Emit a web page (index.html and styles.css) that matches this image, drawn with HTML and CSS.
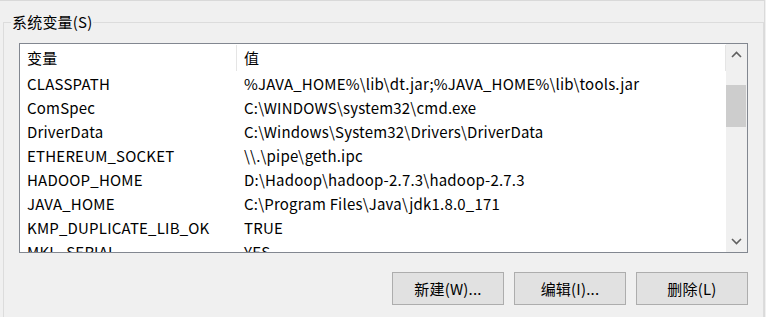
FILE: index.html
```html
<html>
  <head>
    <title>系统变量</title>
    <link rel="stylesheet" href="styles.css">
  </head>
  <body>
    <div class="panel">
      <fieldset class="group">
        <legend class="group-title">系统变量(S)</legend>

        <!-- Lista delle variabili -->
        <div class="listbox">
          <div class="list">
            <div class="row head">
              <div class="cell name">变量</div>
              <div class="cell value">值</div>
            </div>
            <div class="row"><div class="cell name">CLASSPATH</div><div class="cell value">%JAVA_HOME%\lib\dt.jar;%JAVA_HOME%\lib\tools.jar</div></div>
            <div class="row"><div class="cell name">ComSpec</div><div class="cell value">C:\WINDOWS\system32\cmd.exe</div></div>
            <div class="row"><div class="cell name">DriverData</div><div class="cell value">C:\Windows\System32\Drivers\DriverData</div></div>
            <div class="row"><div class="cell name">ETHEREUM_SOCKET</div><div class="cell value">\\.\pipe\geth.ipc</div></div>
            <div class="row"><div class="cell name">HADOOP_HOME</div><div class="cell value">D:\Hadoop\hadoop-2.7.3\hadoop-2.7.3</div></div>
            <div class="row"><div class="cell name">JAVA_HOME</div><div class="cell value">C:\Program Files\Java\jdk1.8.0_171</div></div>
            <div class="row"><div class="cell name">KMP_DUPLICATE_LIB_OK</div><div class="cell value">TRUE</div></div>
            <div class="row"><div class="cell name">MKL_SERIAL</div><div class="cell value">YES</div></div>
          </div>

          <!-- Barra di scorrimento -->
          <div class="scrollbar">
            <div class="arrow">
              <svg width="11" height="7" viewBox="0 0 11 7"><polyline points="1,6 5.5,1.5 10,6" fill="none" stroke="#606060" stroke-width="1.6"/></svg>
            </div>
            <div class="track">
              <div class="thumb"></div>
            </div>
            <div class="arrow">
              <svg width="11" height="7" viewBox="0 0 11 7"><polyline points="1,1 5.5,5.5 10,1" fill="none" stroke="#606060" stroke-width="1.6"/></svg>
            </div>
          </div>
        </div>

        <div class="buttons">
          <button class="btn">新建(W)...</button>
          <button class="btn">编辑(I)...</button>
          <button class="btn">删除(L)</button>
        </div>
      </fieldset>
    </div>
  </body>
</html>
```

FILE: styles.css
```css
body {
  margin: 0;
  background: #f0f0f0;
  font-family: "Noto Sans CJK SC", "Noto Sans", sans-serif;
  font-size: 15px;
  letter-spacing: 0.2px;
  color: #000;
  overflow: hidden;
}

.panel {
  width: 764px;
  height: 316px;
  border-top: 1px solid #d9d9d9;
  border-right: 1px solid #dadada;
}

.group {
  box-sizing: border-box;
  width: 761px;
  height: 305px;
  margin: 11px 0 0 3px;
  padding: 0 15px;
  border: 1px solid #dcdcdc;
  border-bottom: none;
}

.group-title {
  margin-left: -8px;
  padding: 0 1px;
  height: 20px;
  line-height: 20px;
}

.listbox {
  display: flex;
  height: 208px;
  margin-top: 11px;
  border: 1px solid #828790;
  background: #fff;
}

.list {
  flex: 1;
  overflow: hidden;
}

.row {
  display: flex;
  height: 24px;
  line-height: 24px;
  white-space: nowrap;
}

.row.head {
  height: 28px;
  line-height: 28px;
}

.cell {
  padding-left: 7px;
  box-sizing: border-box;
}

.name {
  width: 217px;
}

.value {
  flex: 1;
}

.head .cell {
  border-right: 1px solid #e5e5e5;
  margin: 1px 0;
  line-height: 26px;
}

.scrollbar {
  display: flex;
  flex-direction: column;
  width: 21px;
  background: #f0f0f0;
}

.arrow {
  height: 21px;
  display: flex;
  align-items: center;
  justify-content: center;
}

.track {
  flex: 1;
}

.thumb {
  width: 20px;
  height: 42px;
  margin-top: 20px;
  background: #cdcdcd;
}

.buttons {
  display: flex;
  justify-content: flex-end;
  gap: 10px;
  margin-top: 19px;
}

.btn {
  width: 112px;
  height: 33px;
  background: #e1e1e1;
  border: 1px solid #adadad;
  font-family: inherit;
  font-size: 15px;
  letter-spacing: 0.2px;
  color: #000;
  padding: 0;
}
```
